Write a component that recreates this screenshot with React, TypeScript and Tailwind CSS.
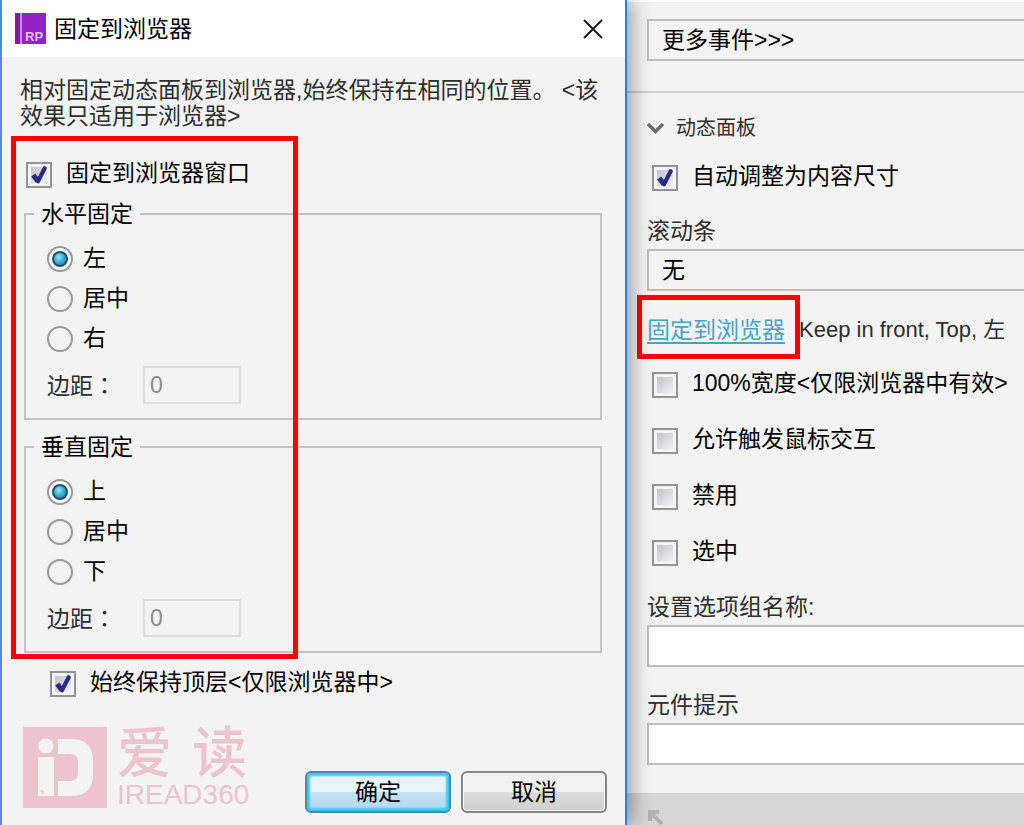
import { useState } from "react";
import type { ReactNode } from "react";

type CheckFieldProps = {
  label: string;
  defaultChecked?: boolean;
};

function CheckField({ label, defaultChecked }: CheckFieldProps) {
  return (
    <label className="flex h-[30px] items-center gap-[14px] text-black">
      <span className="grid shrink-0">
        <input
          type="checkbox"
          defaultChecked={defaultChecked}
          className="peer col-start-1 row-start-1 size-[26px] appearance-none border-2 border-[#939393] bg-linear-to-br from-[#b4bac4] to-[#fafafa] bg-clip-content p-[3px]"
        />
        <svg
          viewBox="0 0 25 25"
          className="pointer-events-none invisible col-start-1 row-start-1 size-[26px] peer-checked:visible"
          fill="none"
          stroke="#2b2b80"
        >
          <path d="M7 12.500 L11.500 18.500" strokeWidth="5" />
          <path d="M11.500 18.500 L18 6" strokeWidth="4" strokeLinecap="round" />
        </svg>
      </span>
      <span className="pb-1">{label}</span>
    </label>
  );
}

type RadioFieldProps = {
  name: string;
  label: string;
  checked: boolean;
  onChange: () => void;
};

function RadioField({ name, label, checked, onChange }: RadioFieldProps) {
  return (
    <label className="flex h-10 items-center gap-[10px] text-black">
      <span className="grid shrink-0 place-items-center">
        <input
          type="radio"
          name={name}
          checked={checked}
          onChange={onChange}
          className="peer col-start-1 row-start-1 size-[26px] appearance-none rounded-full border-2 border-[#999999] checked:bg-[#f9f9f9]"
        />
        <span className="pointer-events-none invisible col-start-1 row-start-1 size-4 rounded-full border-2 border-[#1f4f72] bg-radial-[at_40%_35%] from-[#8ee6fa] via-[#38aed2] to-[#1a7096] peer-checked:visible" />
      </span>
      <span className="pb-[3px]">{label}</span>
    </label>
  );
}

type PinGroupProps = {
  name: string;
  title: string;
  options: string[];
};

function PinGroup({ name, title, options }: PinGroupProps) {
  const [value, setValue] = useState(options[0]);

  return (
    <fieldset className="border-2 border-[#c3c3c3] pb-[14px] pl-[21px]">
      <legend className="-ml-[13px] px-[7px] text-black">{title}</legend>
      <div className="pt-3">
        {options.map((option) => (
          <RadioField
            key={option}
            name={name}
            label={option}
            checked={value === option}
            onChange={() => setValue(option)}
          />
        ))}
      </div>
      <label className="mt-[7px] flex items-center">
        <span className="w-24">
          边距
          {/* the TC face centres the full-width colon */}
          <span className="font-['Noto_Sans_CJK_TC',sans-serif]">：</span>
        </span>
        <input
          type="text"
          defaultValue="0"
          disabled
          className="h-[38px] w-[98px] border-2 border-[#dddddd] px-[5px] text-[#8a8a8a]"
        />
      </label>
    </fieldset>
  );
}

function AppIcon() {
  return (
    <svg viewBox="0 0 31 31" className="size-[31px]">
      <rect width="31" height="31" fill="#9322c4" />
      <rect width="5" height="31" fill="#8416b5" />
      <rect x="5" width="2" height="31" fill="#d08bea" />
      <text
        x="10"
        y="28"
        fill="#e6bff5"
        fontFamily="Liberation Sans"
        fontWeight="bold"
        fontSize="13"
      >
        RP
      </text>
    </svg>
  );
}

function Watermark() {
  return (
    <div className="mb-1 flex items-center gap-[10px] text-[#edc3cd]">
      <svg viewBox="0 0 84 81" className="h-[81px] w-[84px]">
        <rect width="84" height="81" fill="#edc3cd" />
        <g fill="#f3f3f3">
          <circle cx="23" cy="19" r="7.5" />
          <path d="M15 30h16v39h-16z" />
          <path d="M35 12h13q22 0 22 22v13q0 22-22 22h-13v-15h12q8 0 8-8v-11q0-8-8-8h-12z" />
        </g>
        <path d="M17 63l4 1-1 4z" fill="#edc3cd" />
      </svg>
      <div className="flex flex-col">
        <div className="flex gap-5 text-[55px] leading-[56px] font-medium">
          <span>爱</span>
          <span>读</span>
        </div>
        <span className="text-[28px] leading-[28px]">IREAD360</span>
      </div>
    </div>
  );
}

function DialogButton({
  primary,
  children,
}: {
  primary?: boolean;
  children: ReactNode;
}) {
  return (
    <button
      type="button"
      className={
        primary
          ? "h-[42px] w-[146px] rounded-md border-2 border-[#4c86a8] bg-linear-to-b from-[#e6f3fb] from-50% via-[#c6e3f4] via-50% to-[#b2d8ee] text-black shadow-[inset_0_0_2px_3px_#3fc8f5]"
          : "h-[42px] w-[146px] rounded-md border-2 border-[#858585] bg-linear-to-b from-[#f0f0f0] from-50% via-[#dbdbdb] via-50% to-[#d0d0d0] text-black shadow-[inset_0_0_0_1px_#f7f7f7]"
      }
    >
      {children}
    </button>
  );
}

function PinDialog() {
  return (
    <section
      role="dialog"
      aria-label="固定到浏览器"
      className="z-10 flex flex-col border-r-2 border-l-2 border-l-[#4490de] border-r-[#2f80c6] bg-[#f3f3f3] shadow-[4px_0_20px_rgba(0,0,0,0.4)]"
    >
      <header className="flex h-[57px] items-center justify-between bg-white pr-[22px] pl-[13px] text-black">
        <div className="flex items-center gap-2">
          <AppIcon />
          <h1>固定到浏览器</h1>
        </div>
        <button type="button" aria-label="关闭">
          <svg
            viewBox="0 0 20 20"
            className="size-5"
            fill="none"
            stroke="#1a1a1a"
            strokeWidth="2"
          >
            <path d="M1 1l18 18M19 1L1 19" />
          </svg>
        </button>
      </header>

      <div className="flex flex-1 flex-col px-[18px] pt-5 pb-3">
        <p>
          相对固定动态面板到浏览器,始终保持在相同的位置。 &lt;该效果只适用于浏览器&gt;
        </p>

        <div className="relative mt-[31px] mr-[5px] ml-1 flex flex-col">
          <div className="pl-[2px]">
            <CheckField label="固定到浏览器窗口" defaultChecked />
          </div>
          <div className="mt-[11px] flex flex-col gap-[14px]">
            <PinGroup
              name="horizontal"
              title="水平固定"
              options={["左", "居中", "右"]}
            />
            <PinGroup
              name="vertical"
              title="垂直固定"
              options={["上", "居中", "下"]}
            />
          </div>
          <div className="pointer-events-none absolute -top-6 -bottom-[6px] -left-[13px] w-[287px] border-[5px] border-[#ff0000]" />
        </div>

        <div className="mt-4 pl-[30px]">
          <CheckField label="始终保持顶层<仅限浏览器中>" defaultChecked />
        </div>

        <footer className="mt-auto flex items-end justify-between pl-[3px]">
          <Watermark />
          <div className="flex gap-[10px]">
            <DialogButton primary>确定</DialogButton>
            <DialogButton>取消</DialogButton>
          </div>
        </footer>
      </div>
    </section>
  );
}

function PropertiesPanel() {
  return (
    <aside className="flex min-w-0 flex-col overflow-hidden border-t-2 border-white bg-[#f3f3f3]">
      <div className="pt-[17px] pl-5">
        <select
          aria-label="更多事件"
          className="h-[42px] w-full appearance-none border-2 border-r-0 border-[#bebebe] px-[13px] text-black"
        >
          <option>更多事件&gt;&gt;&gt;</option>
        </select>
      </div>
      <hr className="mt-[30px] border-t-2 border-[#d0d0d0]" />

      <div className="flex flex-col pl-5">
        <h2 className="mt-[22px] flex items-center gap-3 text-[20px] leading-[26px]">
          <svg
            viewBox="0 0 17 12"
            className="h-3 w-[17px]"
            fill="none"
            stroke="#6e6e6e"
            strokeWidth="3.5"
          >
            <path d="M1 2l7.500 7.500L16 2" />
          </svg>
          动态面板
        </h2>
        <div className="mt-[22px] pl-[5px]">
          <CheckField label="自动调整为内容尺寸" defaultChecked />
        </div>

        <label htmlFor="scrollbars" className="mt-[25px]">
          滚动条
        </label>
        <select
          id="scrollbars"
          className="mt-[5px] h-[42px] w-full appearance-none border-2 border-r-0 border-[#bebebe] px-[13px] text-black"
        >
          <option>无</option>
        </select>

        <p className="mt-[26px] flex items-center gap-[14px] whitespace-nowrap">
          <span className="relative">
            <a
              href="#pin"
              className="text-[#45a5c9] underline decoration-2 underline-offset-4"
            >
              固定到浏览器
            </a>
            <span className="pointer-events-none absolute -top-[22px] -left-[10px] h-16 w-[163px] border-[5px] border-[#ff0000]" />
          </span>
          <span className="text-[22px]">Keep in front, Top, 左</span>
        </p>

        <div className="mt-[27px] flex flex-col gap-[26px] pl-[5px] whitespace-nowrap">
          <CheckField label="100%宽度<仅限浏览器中有效>" />
          <CheckField label="允许触发鼠标交互" />
          <CheckField label="禁用" />
          <CheckField label="选中" />
        </div>

        <label htmlFor="group-name" className="mt-[26px]">
          设置选项组名称:
        </label>
        <input
          id="group-name"
          type="text"
          className="mt-[5px] h-[42px] w-full border-2 border-r-0 border-[#bebebe] bg-white px-[13px]"
        />

        <label htmlFor="tooltip" className="mt-[25px]">
          元件提示
        </label>
        <input
          id="tooltip"
          type="text"
          className="mt-[5px] h-[42px] w-full border-2 border-r-0 border-[#bebebe] bg-white px-[13px]"
        />
      </div>

      <div className="mt-7 h-[31px] grow overflow-hidden bg-[#d7d7d7] pt-4 pl-5">
        <svg
          viewBox="0 0 16 16"
          className="size-4"
          fill="none"
          stroke="#b2b2b2"
          strokeWidth="4"
        >
          <path d="M3 12V3H12M3 3l12 12" />
        </svg>
      </div>
    </aside>
  );
}

export default function App() {
  return (
    <main className="grid min-h-screen grid-cols-[627fr_397fr] overflow-hidden font-['Liberation_Sans','Noto_Sans_CJK_SC',sans-serif] text-[23px] leading-[26px] text-[#2e2e2e]">
      <PinDialog />
      <PropertiesPanel />
    </main>
  );
}
